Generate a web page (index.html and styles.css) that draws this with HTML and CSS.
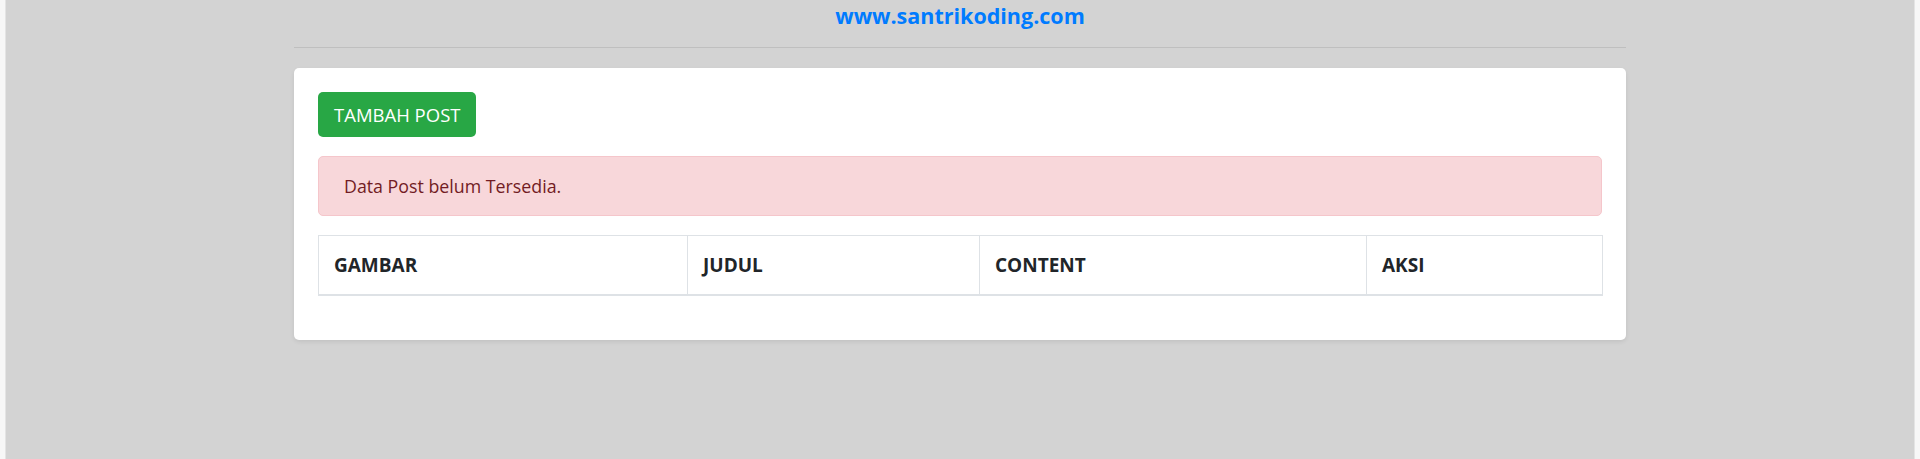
FILE: index.html
```html
<!DOCTYPE html>
<html lang="id">
<head>
<meta charset="utf-8">
<title>Data Post</title>
<link rel="stylesheet" href="styles.css">
</head>
<body>
<div class="page">
  <div class="container">
    <h3 class="site-title">www.santrikoding.com</h3>
    <hr class="divider">
    <div class="card">
      <div class="card-body">
        <a class="btn-add" href="#">TAMBAH POST</a>
        <div class="alert">Data Post belum Tersedia.</div>
        <table class="data-table">
          <colgroup>
            <col class="col-gambar">
            <col class="col-judul">
            <col class="col-content">
            <col class="col-aksi">
          </colgroup>
          <thead>
            <tr>
              <th>GAMBAR</th>
              <th>JUDUL</th>
              <th>CONTENT</th>
              <th>AKSI</th>
            </tr>
          </thead>
          <tbody></tbody>
        </table>
      </div>
    </div>
  </div>
</div>
</body>
</html>
```

FILE: styles.css
```css
* { box-sizing: border-box; }

html, body {
  margin: 0;
  height: 100%;
}

body {
  background: #f7f7f7;
  font-family: "Open Sans", "Noto Sans", sans-serif;
  color: #212529;
}

.page {
  margin: 0 5px;
  min-height: 100%;
  background: #d3d3d3;
  border-left: 1px solid #e4e4e4;
  border-right: 1px solid #e4e4e4;
}

.container {
  width: 1332px;
  margin: 0 auto;
}

.site-title {
  margin: 0;
  padding-top: 1px;
  text-align: center;
  font-size: 21.5px;
  line-height: 30px;
  font-weight: 700;
  color: #007bff;
}

.divider {
  margin: 16px 0 20px;
  border: 0;
  border-top: 1px solid #bfbfbf;
  height: 0;
}

.card {
  background: #fff;
  border-radius: 5px;
  box-shadow: 0 2px 4px rgba(0, 0, 0, 0.08);
}

.card-body {
  padding: 24px;
  display: flex;
  flex-direction: column;
  align-items: flex-start;
}

.btn-add {
  display: inline-block;
  height: 45px;
  padding: 0 16px;
  line-height: 45px;
  background: #28a745;
  color: #fff;
  border-radius: 5px;
  font-size: 18.5px;
  text-decoration: none;
}

.alert {
  align-self: stretch;
  margin-top: 19px;
  height: 60px;
  padding: 0 25px;
  line-height: 58px;
  background: #f8d7da;
  border: 1px solid #f5c6cb;
  border-radius: 5px;
  color: #721c24;
  font-size: 17.8px;
}

.data-table {
  align-self: stretch;
  margin-top: 19px;
  margin-bottom: 20px;
  width: 1284px;
  border-collapse: collapse;
  table-layout: fixed;
}

.col-gambar { width: 369px; }
.col-judul { width: 292px; }
.col-content { width: 387px; }
.col-aksi { width: 236px; }

.data-table th {
  height: 59px;
  padding: 0 15px;
  text-align: left;
  vertical-align: middle;
  font-size: 19px;
  font-weight: 700;
  color: #212529;
  border: 1px solid #dee2e6;
  border-bottom: 2px solid #dee2e6;
}
```
